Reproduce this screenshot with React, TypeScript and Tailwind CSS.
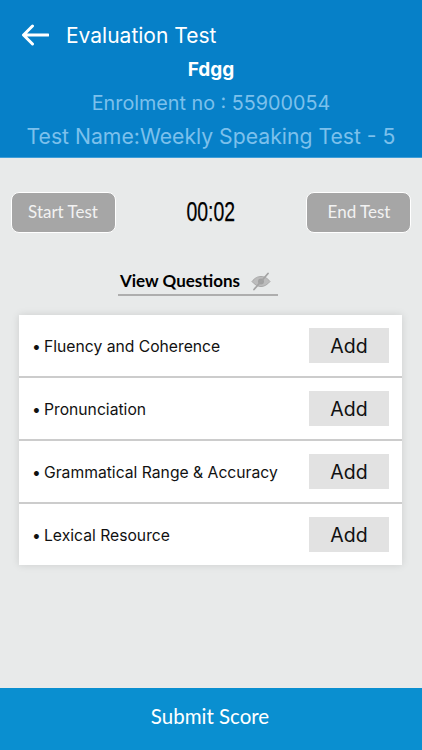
const CRITERIA = [
  "Fluency and Coherence",
  "Pronunciation",
  "Grammatical Range & Accuracy",
  "Lexical Resource",
];

function BackArrow() {
  return (
    <svg width="28" height="22" viewBox="0 0 28 22" fill="none" aria-hidden="true">
      <path
        d="M27 11H3M11.5 2 2.5 11l9 9"
        stroke="white"
        strokeWidth="3"
        strokeLinecap="round"
        strokeLinejoin="round"
      />
    </svg>
  );
}

// filled eye with a slash through it
function HiddenEye() {
  return (
    <svg width="20" height="20" viewBox="0 0 20 20" fill="none" aria-hidden="true">
      <path d="M1 10.500C4 6.800 6.800 5.500 10 5.500s6 1.300 9 5C16 14 13.200 15.500 10 15.500S4 14 1 10.500Z" fill="#bcbcbc" stroke="#a8a8a8" />
      <circle cx="10" cy="10.500" r="3" fill="#a2a2a2" />
      <path d="M3 18.500 17 2.500" stroke="#a4a4a4" strokeWidth="1.800" strokeLinecap="round" />
    </svg>
  );
}

function Header() {
  return (
    <header className="h-[158px] shrink-0 bg-[#0680c8] border-b border-[#3f9ed8] font-['Inter',sans-serif] text-center">
      <div className="flex items-center h-[34px] mt-[18px] pl-[21px]">
        <BackArrow />
        <span className="ml-[17px] pt-[1px] text-[21px] text-white">Evaluation Test</span>
      </div>
      <p className="mt-[4px] h-[28px] leading-[28px] text-[19px] font-bold text-white">Fdgg</p>
      <p className="mt-[6px] h-[26px] leading-[26px] text-[19.75px] text-[#7cc0ec]">Enrolment no : 55900054</p>
      <p className="mt-[5px] h-[30px] leading-[30px] text-[21.2px] text-[#7cc0ec]">Test Name:Weekly Speaking Test - 5</p>
    </header>
  );
}

function ActionButton({ label }: { label: string }) {
  return (
    <button className="w-[105px] h-[41px] pb-[2px] rounded-[8px] border border-white bg-[#a6a6a6] text-[#f2f2f2] text-[17px] font-['Lato',sans-serif]">
      {label}
    </button>
  );
}

function CriterionRow({ label, last }: { label: string; last: boolean }) {
  return (
    <div className={`flex items-center justify-between pl-[13px] pr-[13px] ${last ? "h-[61px]" : "h-[63px] border-b-2 border-[#cccccc]"}`}>
      <span className="pt-[2px] text-[15.7px] text-[#111111] font-['Inter',sans-serif]">
        <span className="inline-block w-[12px]">•</span>
        {label}
      </span>
      <button className="w-[80px] h-[35px] pt-[2px] bg-[#e2e2e2] text-[19.5px] text-[#111111] font-['Inter',sans-serif]">Add</button>
    </div>
  );
}

export default function App() {
  return (
    <div className="flex flex-col w-[422px] h-[750px] bg-[#e8eaea] overflow-hidden">
      <Header />

      <main className="flex-1 flex flex-col">
        <div className="flex items-center justify-between px-[10.5px] mt-[34px]">
          <ActionButton label="Start Test" />
          <span className="inline-block scale-x-[0.72] text-[27px] text-black [-webkit-text-stroke:0.25px_black] font-['Liberation_Sans',sans-serif]">00:02</span>
          <ActionButton label="End Test" />
        </div>

        <div className="flex items-center gap-[11px] w-[160px] h-[31px] mt-[32px] ml-[118px] pl-[2px] pt-[2px] border-b-2 border-[#aeaeae]">
          <span className="text-[17px] font-bold text-black font-['Lato',sans-serif]">View Questions</span>
          <HiddenEye />
        </div>

        <section className="ml-[19px] mr-[20px] mt-[19px] bg-white shadow-[0_0_8px_rgba(0,0,0,0.12)]">
          {CRITERIA.map((label, i) => (
            <CriterionRow key={label} label={label} last={i === CRITERIA.length - 1} />
          ))}
        </section>
      </main>

      <footer className="h-[62px] shrink-0 flex items-center justify-center pr-[2px] pb-[5px] bg-[#0a8fd0] text-white text-[20.5px] font-['Lato',sans-serif]">
        Submit Score
      </footer>
    </div>
  );
}
